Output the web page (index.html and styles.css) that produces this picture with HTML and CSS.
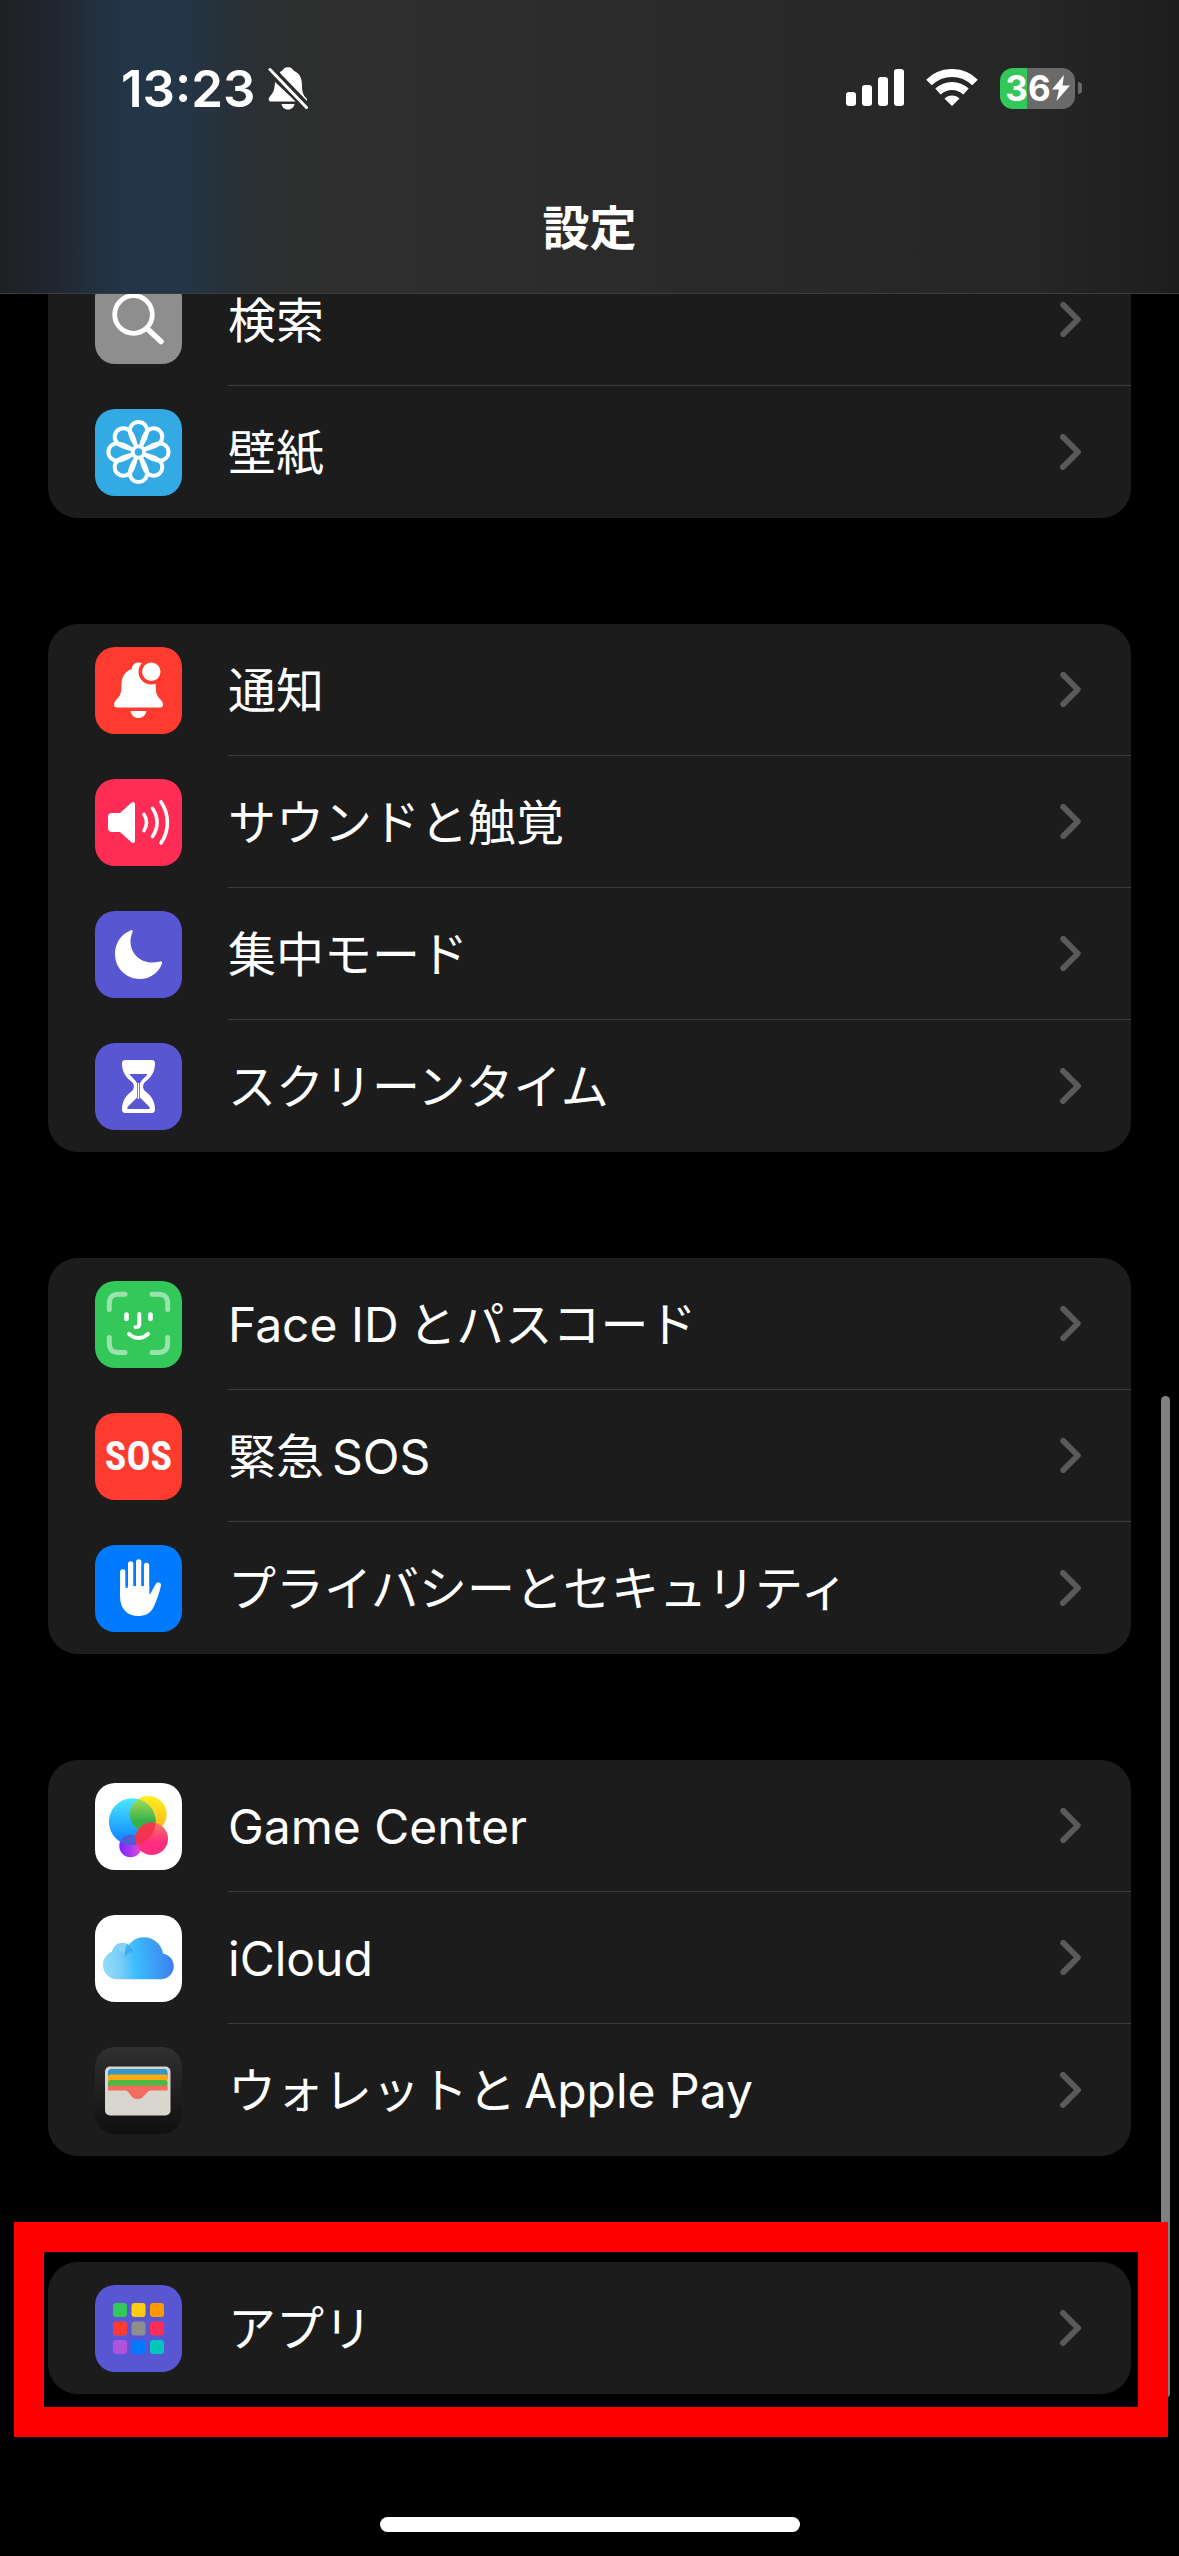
FILE: index.html
```html
<!DOCTYPE html>
<html lang="ja">

<head>
  <meta charset="UTF-8">
  <meta name="viewport" content="width=device-width, initial-scale=1.0">
  <title>設定</title>
  <link rel="stylesheet" href="styles.css">
</head>

<body>
  <!-- 共通シンボル -->
  <svg class="defs" width="0" height="0" aria-hidden="true">
    <symbol id="chevron" viewBox="0 0 22 36">
      <path d="M3 3l15 15L3 33" fill="none" stroke="#5a5a5c" stroke-width="6" stroke-linecap="round" stroke-linejoin="round" />
    </symbol>
  </svg>

  <header class="header">
    <div class="status">
      <div class="status-left">
        <span class="time">13:23</span>
        <svg class="mute" width="40" height="44" viewBox="0 0 40 44">
          <path fill="#fff" d="M12 6C14 5 15 4 15.500 3C17 .5 23 .5 24.500 3C25 4 26 5 28 6C33 9 34 14 34 20C34 27 36 30 39 33L39 35L12 7ZM7 16L28 35.500H3C.5 35.500 0 33 1.500 31C5 27 6.500 25 7 16ZM13.500 38H26.500C26 41 23.500 43.500 20 43.500C16.500 43.500 14 41 13.500 38Z" />
          <path d="M2 3.500L38.500 41.500" stroke="#2a2c2e" stroke-width="7.500" />
          <path d="M2 3.500L38.500 41.500" stroke="#fff" stroke-width="3" stroke-linecap="round" />
        </svg>
      </div>
      <div class="status-right">
        <svg width="58" height="38" viewBox="0 0 58 38" fill="#fff">
          <rect x="0" y="23" width="10" height="14" rx="3" />
          <rect x="16" y="16" width="10" height="21" rx="3" />
          <rect x="32" y="8" width="10" height="29" rx="3" />
          <rect x="48" y="0" width="10" height="37" rx="3" />
        </svg>
        <svg width="52" height="38" viewBox="0 0 52 38">
          <g fill="none" stroke="#fff" stroke-width="8">
            <path d="M3 13.500C16 .8 36 .8 49 13.500" />
            <path d="M12 22.500C20 15 32 15 40 22.500" />
          </g>
          <path fill="#fff" d="M26 37L18.500 29.500C22.500 25.500 29.500 25.500 33.500 29.500Z" />
        </svg>
        <div class="battery-wrap">
          <div class="battery">
            <span>36</span>
            <svg width="18" height="26" viewBox="0 0 18 26">
              <path fill="#fff" d="M12 0L0 14.500H7L4.500 26L18 10.500H10.500Z" />
            </svg>
          </div>
          <div class="battery-cap"></div>
        </div>
      </div>
    </div>
    <h1 class="title">設定</h1>
  </header>

  <main class="settings">
    <nav class="group">
      <a class="row" href="#search">
        <svg class="icon" viewBox="0 0 87 87">
          <rect width="87" height="87" rx="20" fill="#8e8e8e" />
          <g fill="none" stroke="#fff" stroke-linecap="round">
            <circle cx="38.500" cy="37.500" r="18.800" stroke-width="4.800" />
            <path d="M52 51.500L66 64.500" stroke-width="5.500" />
          </g>
        </svg>
        <span class="label">検索</span>
        <svg class="chevron"><use href="#chevron" /></svg>
      </a>
      <a class="row" href="#wallpaper">
        <svg class="icon" viewBox="0 0 87 87">
          <rect width="87" height="87" rx="20" fill="#34aae4" />
          <defs>
            <path id="petal" d="M-1.500 -5C-6.500 -12 -8.600 -16 -8.600 -21.500A8.600 8.600 0 0 1 8.600 -21.500C8.600 -16 6.500 -12 1.500 -5" />
          </defs>
          <g transform="translate(43.500 43)" fill="none" stroke="#fff" stroke-width="4">
            <use href="#petal" />
            <use href="#petal" transform="rotate(45)" />
            <use href="#petal" transform="rotate(90)" />
            <use href="#petal" transform="rotate(135)" />
            <use href="#petal" transform="rotate(180)" />
            <use href="#petal" transform="rotate(225)" />
            <use href="#petal" transform="rotate(270)" />
            <use href="#petal" transform="rotate(315)" />
            <circle r="5.500" stroke-width="3.500" />
          </g>
        </svg>
        <span class="label">壁紙</span>
        <svg class="chevron"><use href="#chevron" /></svg>
      </a>
    </nav>

    <nav class="group">
      <a class="row" href="#notifications">
        <svg class="icon" viewBox="0 0 87 87">
          <rect width="87" height="87" rx="20" fill="#ff3b30" />
          <path fill="#fff" d="M36.500 22C37.500 17.500 40 15.500 43.500 15.500C47 15.500 49.500 17.500 50.500 22C58 25 60.700 31 60.700 38C60.700 45 61.500 48 64 51C66 53 68 55 68 57.500C68 59.500 67 60.500 65 60.500H22C20 60.500 19 59.500 19 57.500C19 55 21 53 23 51C25.500 48 26.500 45 26.500 38C26.500 31 29 25 36.500 22ZM35.500 64H51.500C50.500 68.500 47.500 71 43.500 71C39.500 71 36.500 68.500 35.500 64Z" />
          <circle cx="56.300" cy="24.700" r="12.800" fill="#ff3b30" />
          <circle cx="56.300" cy="24.700" r="9.200" fill="#fff" />
        </svg>
        <span class="label">通知</span>
        <svg class="chevron"><use href="#chevron" /></svg>
      </a>
      <a class="row" href="#sounds">
        <svg class="icon" viewBox="0 0 87 87">
          <rect width="87" height="87" rx="20" fill="#ff2d55" />
          <path fill="#fff" d="M17 34H25L36 24C38 22.300 40 23 40 25.500V61.500C40 64 38 64.700 36 63L25 53H17C14.500 53 13 51.500 13 49V38C13 35.500 14.500 34 17 34Z" />
          <g fill="none" stroke="#fff" stroke-width="3.600" stroke-linecap="round">
            <path d="M49 35.500C52.300 40 52.300 47 49 51.500" />
            <path d="M57.500 29.500C63.500 38 63.500 49 57.500 57.500" />
            <path d="M66 23C74.500 35 74.500 52 66 64" />
          </g>
        </svg>
        <span class="label">サウンドと触覚</span>
        <svg class="chevron"><use href="#chevron" /></svg>
      </a>
      <a class="row" href="#focus">
        <svg class="icon" viewBox="0 0 87 87">
          <rect width="87" height="87" rx="20" fill="#5856d2" />
          <path fill="#fff" d="M36 19.200C26 23 20 32 20 43C20 57 31 68 45 68C55 68 63.500 62 67 52.500C67.500 51 66.500 49.800 65 50.400C49 55 35.500 45 35.500 30C35.500 26.500 36.500 23.500 37.500 21C38 19.500 37.300 18.700 36 19.200Z" />
        </svg>
        <span class="label">集中モード</span>
        <svg class="chevron"><use href="#chevron" /></svg>
      </a>
      <a class="row" href="#screen-time">
        <svg class="icon" viewBox="0 0 87 87">
          <rect width="87" height="87" rx="20" fill="#5856d2" />
          <path fill="#fff" d="M30 17H57C59 17 60 18.500 60 20.500C60 29 56 34.500 50 39C47.500 41 47.500 46 50 48C56 52.500 60 58 60 66.500C60 68.500 59 70 57 70H30C28 70 27 68.500 27 66.500C27 58 31 52.500 37 48C39.500 46 39.500 41 37 39C31 34.500 27 29 27 20.500C27 18.500 28 17 30 17Z" />
          <path fill="#5856d2" d="M34.500 31H52.500C50.500 34.500 46 37 45 40.500V54.500L54 63.500C55 65 55 66 54 66H33C32 66 32 65 33 63.500L42 54.500V40.500C41 37 36.500 34.500 34.500 31Z" />
          <path d="M43.500 40V56" stroke="#fff" stroke-width="1.500" />
        </svg>
        <span class="label">スクリーンタイム</span>
        <svg class="chevron"><use href="#chevron" /></svg>
      </a>
    </nav>

    <nav class="group">
      <a class="row" href="#face-id">
        <svg class="icon" viewBox="0 0 87 87">
          <rect width="87" height="87" rx="20" fill="#34c759" />
          <g fill="none" stroke="#fff" stroke-linecap="round">
            <path opacity=".5" stroke-width="5" d="M14.300 28.500V23C14.300 16 17 13.300 24 13.300H30M57 13.300H63C70 13.300 72.700 16 72.700 23V28.500M72.700 56.500V62C72.700 69 70 71.500 63 71.500H57M30 71.500H24C17 71.500 14.300 69 14.300 62V56.500" />
            <path stroke-width="4.600" d="M31.500 33.500V38M55.500 33.500V38" />
            <path stroke-width="4" d="M44.300 33V43C44.300 45.500 43 46.200 40.500 46.200M34 52.800C39.500 58.300 47.500 58.300 53 52.800" />
          </g>
        </svg>
        <span class="label"><span class="before-kana">Face ID</span>とパスコード</span>
        <svg class="chevron"><use href="#chevron" /></svg>
      </a>
      <a class="row" href="#sos">
        <span class="icon icon-sos">SOS</span>
        <span class="label">緊急<span class="after-kana">SOS</span></span>
        <svg class="chevron"><use href="#chevron" /></svg>
      </a>
      <a class="row" href="#privacy">
        <svg class="icon" viewBox="0 0 87 87">
          <rect width="87" height="87" rx="20" fill="#007aff" />
          <g fill="none" stroke="#fff" stroke-width="5.400" stroke-linecap="round">
            <path d="M27.800 27V50M35.700 19V50M43.700 17V50M51.500 20.500V50" />
          </g>
          <path fill="#fff" d="M25.100 41H54.200V50C56 48 58.500 43 60.500 39.500C62 36.500 66.500 37 66 40.500C64.500 48 62 54 59.500 60C56.500 67.500 51.500 71 43.500 71C32.500 71 25.100 64 25.100 52Z" />
          <path d="M31.700 26V43M39.700 20V41M47.600 20V41" stroke="#007aff" stroke-width="2" />
        </svg>
        <span class="label">プライバシーとセキュリティ</span>
        <svg class="chevron"><use href="#chevron" /></svg>
      </a>
    </nav>

    <nav class="group">
      <a class="row" href="#game-center">
        <svg class="icon" viewBox="0 0 87 87">
          <defs>
            <linearGradient id="gcBlue" x2="0" y2="1"><stop stop-color="#4be8ff" /><stop offset="1" stop-color="#0a7cff" /></linearGradient>
            <linearGradient id="gcYellow" x2="0" y2="1"><stop stop-color="#fff01e" /><stop offset="1" stop-color="#ffb01e" /></linearGradient>
            <linearGradient id="gcGreen" x2="0" y2="1"><stop stop-color="#b4e05a" /><stop offset=".7" stop-color="#35b04a" /></linearGradient>
            <linearGradient id="gcPink" x2="0" y2="1"><stop stop-color="#f4785e" /><stop offset=".6" stop-color="#ff2d80" /></linearGradient>
            <linearGradient id="gcPurple"><stop stop-color="#7a22ff" /><stop offset="1" stop-color="#e04fe0" /></linearGradient>
            <clipPath id="gcClip"><circle cx="37.300" cy="38.700" r="23.400" /></clipPath>
          </defs>
          <rect width="87" height="87" rx="20" fill="#fff" />
          <circle cx="35.500" cy="63" r="11.200" fill="url(#gcPurple)" />
          <circle cx="53.300" cy="31.300" r="18.400" fill="url(#gcYellow)" />
          <circle cx="37.300" cy="38.700" r="23.400" fill="url(#gcBlue)" />
          <g clip-path="url(#gcClip)">
            <circle cx="53.300" cy="31.300" r="18.400" fill="url(#gcGreen)" />
            <circle cx="35.500" cy="63" r="11.200" fill="#4a5ed6" />
          </g>
          <circle cx="56.700" cy="55.700" r="16.300" fill="url(#gcPink)" />
          <circle cx="56.700" cy="55.700" r="16.300" fill="#f2304a" opacity=".85" clip-path="url(#gcClip)" />
        </svg>
        <span class="label">Game Center</span>
        <svg class="chevron"><use href="#chevron" /></svg>
      </a>
      <a class="row" href="#icloud">
        <svg class="icon" viewBox="0 0 87 87">
          <defs>
            <linearGradient id="cloud" gradientUnits="userSpaceOnUse" x1="8" y1="50" x2="79" y2="44">
              <stop stop-color="#93dcf8" /><stop offset=".25" stop-color="#78cdf7" /><stop offset=".45" stop-color="#3dbcfd" /><stop offset=".8" stop-color="#3c96f3" /><stop offset="1" stop-color="#3b7cf0" />
            </linearGradient>
          </defs>
          <rect width="87" height="87" rx="20" fill="#fff" />
          <circle cx="27.500" cy="38.500" r="10.700" fill="#84d2f6" />
          <path fill="url(#cloud)" d="M22.500 64.300A14.300 14.300 0 1 1 30 38A19.300 19.300 0 0 1 68 38.500A13 13 0 0 1 66 64.300Z" />
          <path fill="#2f9fea" opacity=".6" d="M32 29C35 31 38 34 38 38C34 36 32 39 30 42C29.500 37 30 32 32 29Z" />
        </svg>
        <span class="label">iCloud</span>
        <svg class="chevron"><use href="#chevron" /></svg>
      </a>
      <a class="row" href="#wallet">
        <svg class="icon" viewBox="0 0 87 87">
          <defs>
            <linearGradient id="walletBg" x2="0" y2="1"><stop stop-color="#303030" /><stop offset="1" stop-color="#101010" /></linearGradient>
          </defs>
          <rect width="87" height="87" rx="20" fill="url(#walletBg)" />
          <rect x="10" y="19.500" width="65.500" height="49" rx="5" fill="#d9d6d0" />
          <path fill="#3595c9" d="M13 32V25.500C13 23.500 14 22 16 22H69.500C71.500 22 72.500 23.500 72.500 25.500V32Z" />
          <path fill="#ffab0f" d="M13 38V30.500C13 28.500 14 27.500 16 27.500H69.500C71.500 27.500 72.500 28.500 72.500 30.500V38Z" />
          <path fill="#4ab946" d="M13 42V36C13 34 14 33 16 33H69.500C71.500 33 72.500 34 72.500 36V42Z" />
          <path fill="#f26d5f" d="M13 43.500V41C13 39.500 14 38.500 16 38.500H69.500C71.500 38.500 72.500 39.500 72.500 41V43.500H56C51 43.500 50 52 42.500 52C35 52 35 43.500 30 43.500Z" />
        </svg>
        <span class="label">ウォレットと<span class="after-kana">Apple Pay</span></span>
        <svg class="chevron"><use href="#chevron" /></svg>
      </a>
    </nav>

    <nav class="group">
      <a class="row" href="#apps">
        <svg class="icon" viewBox="0 0 87 87">
          <rect width="87" height="87" rx="20" fill="#5856d2" />
          <rect x="18" y="18" width="14" height="14" rx="3" fill="#34c759" />
          <rect x="36.500" y="18" width="14" height="14" rx="3" fill="#ffcc0f" />
          <rect x="55" y="18" width="14" height="14" rx="3" fill="#ff9900" />
          <rect x="18" y="36.500" width="14" height="14" rx="3" fill="#ff3b30" />
          <rect x="36.500" y="36.500" width="14" height="14" rx="3" fill="#8e8e8e" />
          <rect x="55" y="36.500" width="14" height="14" rx="3" fill="#ff2d55" />
          <rect x="18" y="55" width="14" height="14" rx="3" fill="#af52de" />
          <rect x="36.500" y="55" width="14" height="14" rx="3" fill="#007aff" />
          <rect x="55" y="55" width="14" height="14" rx="3" fill="#00c7be" />
        </svg>
        <span class="label">アプリ</span>
        <svg class="chevron"><use href="#chevron" /></svg>
      </a>
      <div class="highlight"></div>
    </nav>
  </main>

  <div class="scrollbar"></div>
  <div class="home-bar"></div>
</body>

</html>
```

FILE: styles.css
```css
* {
  box-sizing: border-box;
}

body {
  margin: 0;
  background: #000;
  color: #fff;
  font-family: Inter, 'Noto Sans CJK JP', sans-serif;
  font-size: 48px;
}

svg {
  display: block;
}

.defs {
  position: absolute;
}

/* ヘッダー（リストの上に重なる） */
.header {
  position: fixed;
  top: 0;
  left: 0;
  right: 0;
  z-index: 2;
  padding-bottom: 13px;
  border-bottom: 1px solid #3c3c3d;
  background: linear-gradient(90deg, #1e2022 0%, #20252f 4%, #22303e 8%, #233649 11%, #233648 15%, #28313a 19%, #2d2e2f 24%, #2e2e2e 35%, #2a2a2a 60%, #262626 88%, #1d1d1d 100%);
}

.status {
  display: flex;
  justify-content: space-between;
  align-items: center;
  height: 176px;
  padding: 0 97px 0 121px;
}

.status-left {
  display: flex;
  align-items: center;
  gap: 12px;
}

.time {
  font-size: 51px;
  font-weight: 600;
}

.status-right {
  display: flex;
  align-items: center;
  gap: 22px;
}

.battery-wrap {
  display: flex;
  align-items: center;
  gap: 3px;
}

.battery {
  display: flex;
  justify-content: center;
  align-items: center;
  gap: 1px;
  width: 75px;
  height: 41px;
  border-radius: 13px;
  background: linear-gradient(90deg, #34c759 36%, #6a6a6a 36%);
  font-size: 35px;
  font-weight: 700;
}

.battery-cap {
  width: 4px;
  height: 12px;
  border-radius: 0 4px 4px 0;
  background: #6a6a6a;
}

.title {
  margin: 0;
  font-size: 47px;
  font-weight: 700;
  line-height: 104px;
  text-align: center;
}

/* 設定リスト */
.settings {
  display: flex;
  flex-direction: column;
  gap: 106px;
  padding: 254px 48px 162px;
}

.group {
  position: relative;
  border-radius: 30px;
  background: #1c1c1c;
}

.row {
  display: flex;
  align-items: center;
  height: 132px;
  padding-left: 47px;
  color: #fff;
  text-decoration: none;
}

.icon {
  flex: none;
  width: 87px;
  height: 87px;
  margin-right: 46px;
}

.icon-sos {
  display: flex;
  justify-content: center;
  align-items: center;
  border-radius: 20px;
  background: #ff3b30;
  font-family: 'Roboto Condensed', 'Liberation Sans Narrow', Roboto, sans-serif;
  font-size: 40px;
  font-weight: 700;
}

.label {
  flex: 1;
  height: 132px;
  line-height: 134px;
  white-space: nowrap;
}

.chevron {
  flex: none;
  width: 71px;
  height: 132px;
  padding: 48px 49px 48px 0;
}

.row:not(:last-of-type) .label,
.row:not(:last-of-type) .chevron {
  border-bottom: 1px solid #3c3c3e;
}

/* 和欧間のアキ */
.before-kana {
  margin-right: 10px;
}

.after-kana {
  margin-left: 8px;
}

.highlight {
  position: absolute;
  inset: -40px -37px -43px -34px;
  z-index: 3;
  border: 30px solid #fe0000;
  pointer-events: none;
}

.scrollbar {
  position: fixed;
  top: 1396px;
  right: 9px;
  bottom: 158px;
  z-index: 1;
  width: 9px;
  border-radius: 5px;
  background: #808080;
}

.home-bar {
  position: fixed;
  bottom: 24px;
  left: 50%;
  width: 420px;
  height: 15px;
  margin-left: -210px;
  border-radius: 8px;
  background: #fff;
}
```
